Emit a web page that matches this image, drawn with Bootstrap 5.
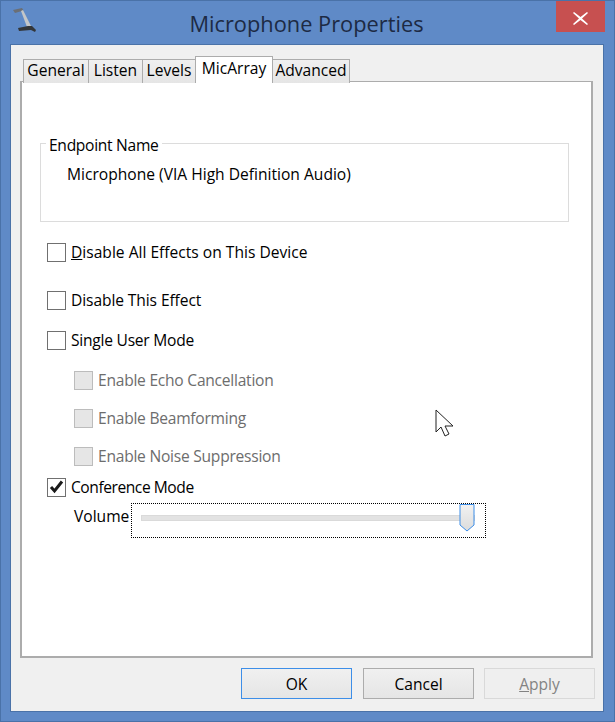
<!DOCTYPE html>
<html lang="en">
<head>
<meta charset="utf-8">
<title>Microphone Properties</title>
<link rel="stylesheet" href="https://cdn.jsdelivr.net/npm/bootstrap@5.3.0/dist/css/bootstrap.min.css">
<style>
html,body{margin:0;height:722px;overflow:hidden;background:#5f8ac7}
body{font-family:"Open Sans","Noto Sans",sans-serif;font-size:15.6px;line-height:20px;color:#000}
.win-frame{width:615px;height:722px;border:1px solid #4a72a8;background:#5f8ac7;position:relative;padding:0 10px 10px 9px}
.win-title{height:43px;position:relative}
.win-heading{font-size:21.8px;line-height:28px;color:#1d2a44;padding-top:9px;margin-left:-10px;width:613px;text-align:center}
.win-icon{position:absolute;left:0;top:4px}
.win-close{position:absolute;right:-1px;top:0;width:49px;height:31px;background:#c75050;border:0;padding:0}
.win-client{height:668px;width:594px;background:#f0f0f0;border:1px solid #4a72a8;padding:11px 9px 0 9px}
.tab-strip{height:26px;padding-left:3px;border:0;flex-wrap:nowrap}
.tab-strip .nav-link{margin:3px -1px 0 0;height:24px;padding:0;text-align:center;color:#000;background:linear-gradient(#f0f0f0,#e5e5e5);border:1px solid #acacac;border-bottom:0;border-radius:0;font-size:15.6px;line-height:20px}
.tab-strip .nav-link.active{margin-top:0;height:27px;background:#fff;color:#000;border-color:#acacac;padding-top:0;position:relative;z-index:1;line-height:23px}
.t-general{width:66px}.t-listen{width:55px}.t-levels{width:54px}.t-mic{width:78px}.t-adv{width:78px}
.tab-body{width:573px;height:577px;background:#fff;border:2px solid #acacac;border-width:1px 2px 2px 2px;padding:0 0 0 18px;margin-top:-1px}
.end-group{width:529px;height:79px;border:1px solid #dcdcdc;margin-top:61px;padding:0 0 0 26px;position:relative}
.end-legend{position:absolute;left:5px;top:-9px;background:#fff;padding:0 3px;font-size:15.6px;line-height:20px;float:none;width:auto;margin:0;letter-spacing:-.3px}
.end-value{padding-top:20px}
.chk-row{display:flex;align-items:center;gap:5px;height:20px;margin:0;padding:0}
.chk-box{width:19px;height:19px;margin:0;border:1px solid #707070;background:#fff;display:block;flex:none}
.chk-row.off{color:#6d6d6d;padding-left:27px;letter-spacing:-.25px}
.chk-row.off .chk-box{background:#e6e6e6;border-color:#bcbcbc}
.r1{margin-top:20px;margin-left:7px}.r2{margin-top:28px;margin-left:7px;letter-spacing:-.1px}.r3{margin-top:20px;margin-left:7px;letter-spacing:-.25px}
.r4{margin-top:20px;margin-left:7px}.r5,.r6{margin-top:18px;margin-left:7px}.r5{letter-spacing:-.33px}.r7{margin-top:11px;margin-left:7px;letter-spacing:-.45px}
.vol-row{margin-top:5px;margin-left:34px;display:flex;align-items:flex-start}
.vol-label{width:57px;flex:none;padding-top:4px}
.vol-focus{width:355px;height:35px;border:1px dotted #000;position:relative;margin-top:1px}
.vol-track{position:absolute;left:9px;top:11px;width:334px;height:6px;background:#e3e3e3;border:1px solid #dadada}
.vol-thumb{position:absolute;left:327px;top:0;display:block}
.foot-row{display:flex;justify-content:flex-start;padding:10px 0 0 221px}
.foot-btn{width:111px;height:31px;padding:1px 0 0;font-size:15.6px;line-height:20px;border-radius:0;color:#000;border:1px solid #acacac;background:linear-gradient(#f0f0f0,#e5e5e5);margin-right:11px;flex:none}
.foot-btn.ok{border-color:#3d8ee8}
.foot-btn.dis,.foot-btn.dis:disabled{color:#838383;background:#efefef;border-color:#d9d9d9;opacity:1;margin:0 0 0 -1px}
.mouse-arrow{position:absolute;left:434px;top:408px}
</style>
</head>
<body>
<div class="win-frame">
  <div class="win-title">
    <svg class="win-icon" width="28" height="30" viewBox="0 0 28 30"><path d="M3 5 L12 3 L13.5 5.5 L5 8 Z" fill="#6b6f75"/><path d="M11 6 L13 5 L21 21 L17 22 Z" fill="#c4c6c8"/><path d="M8 23 L18 21 L22 21 L26 25 L25 27 L21 25 L9 26 Z" fill="#33363a"/></svg>
    <div class="win-heading">Microphone Properties</div>
    <button class="win-close" aria-label="Close"><svg width="15" height="13" viewBox="0 0 15 13"><path d="M1 0 L7.5 5 L14 0 L15 1 L9 6.5 L15 12 L14 13 L7.5 8 L1 13 L0 12 L6 6.5 L0 1 Z" fill="#fff"/></svg></button>
  </div>
  <div class="win-client">
    <ul class="nav nav-tabs tab-strip">
      <li class="nav-item"><a class="nav-link t-general" href="#">General</a></li>
      <li class="nav-item"><a class="nav-link t-listen" href="#">Listen</a></li>
      <li class="nav-item"><a class="nav-link t-levels" href="#">Levels</a></li>
      <li class="nav-item"><a class="nav-link active t-mic" href="#">MicArray</a></li>
      <li class="nav-item"><a class="nav-link t-adv" href="#">Advanced</a></li>
    </ul>
    <div class="tab-body">
      <fieldset class="end-group">
        <legend class="end-legend">Endpoint Name</legend>
        <div class="end-value">Microphone (VIA High Definition Audio)</div>
      </fieldset>
      <div class="chk-row r1"><span class="chk-box"></span><span><u>D</u>isable All Effects on This Device</span></div>
      <div class="chk-row r2"><span class="chk-box"></span><span>Disable This Effect</span></div>
      <div class="chk-row r3"><span class="chk-box"></span><span>Single User Mode</span></div>
      <div class="chk-row off r4"><span class="chk-box"></span><span>Enable Echo Cancellation</span></div>
      <div class="chk-row off r5"><span class="chk-box"></span><span>Enable Beamforming</span></div>
      <div class="chk-row off r6"><span class="chk-box"></span><span>Enable Noise Suppression</span></div>
      <div class="chk-row r7"><span class="chk-box"><svg class="d-block" width="17" height="17" viewBox="0 0 17 17"><path d="M3 8 L6.5 12 L14 2.5" fill="none" stroke="#1a1a1a" stroke-width="3"/></svg></span><span>Conference Mode</span></div>
      <div class="vol-row"><span class="vol-label">Volume</span>
        <div class="vol-focus"><div class="vol-track"></div>
          <svg class="vol-thumb" width="16" height="28" viewBox="0 0 16 28"><defs><linearGradient id="th" x1="0" y1="0" x2="0" y2="1"><stop offset="0" stop-color="#f2f2f2"/><stop offset="1" stop-color="#dcdcdc"/></linearGradient></defs><path d="M1 .5 H15 V21 L8 27 L1 21 Z" fill="url(#th)" stroke="#3d8ee8"/></svg>
        </div>
      </div>
    </div>
    <div class="foot-row">
      <button class="btn foot-btn ok">OK</button>
      <button class="btn foot-btn">Cancel</button>
      <button class="btn foot-btn dis" disabled><u>A</u>pply</button>
    </div>
  </div>
  <svg class="mouse-arrow" width="20" height="30" viewBox="0 0 20 30"><path d="M1 1 V23 L6 18 L10 27 L14 25 L10 17 L18 17 Z" fill="#fff" stroke="#222" stroke-width="1"/></svg>
</div>
<script src="https://cdn.jsdelivr.net/npm/bootstrap@5.3.0/dist/js/bootstrap.bundle.min.js"></script>
</body>
</html>
